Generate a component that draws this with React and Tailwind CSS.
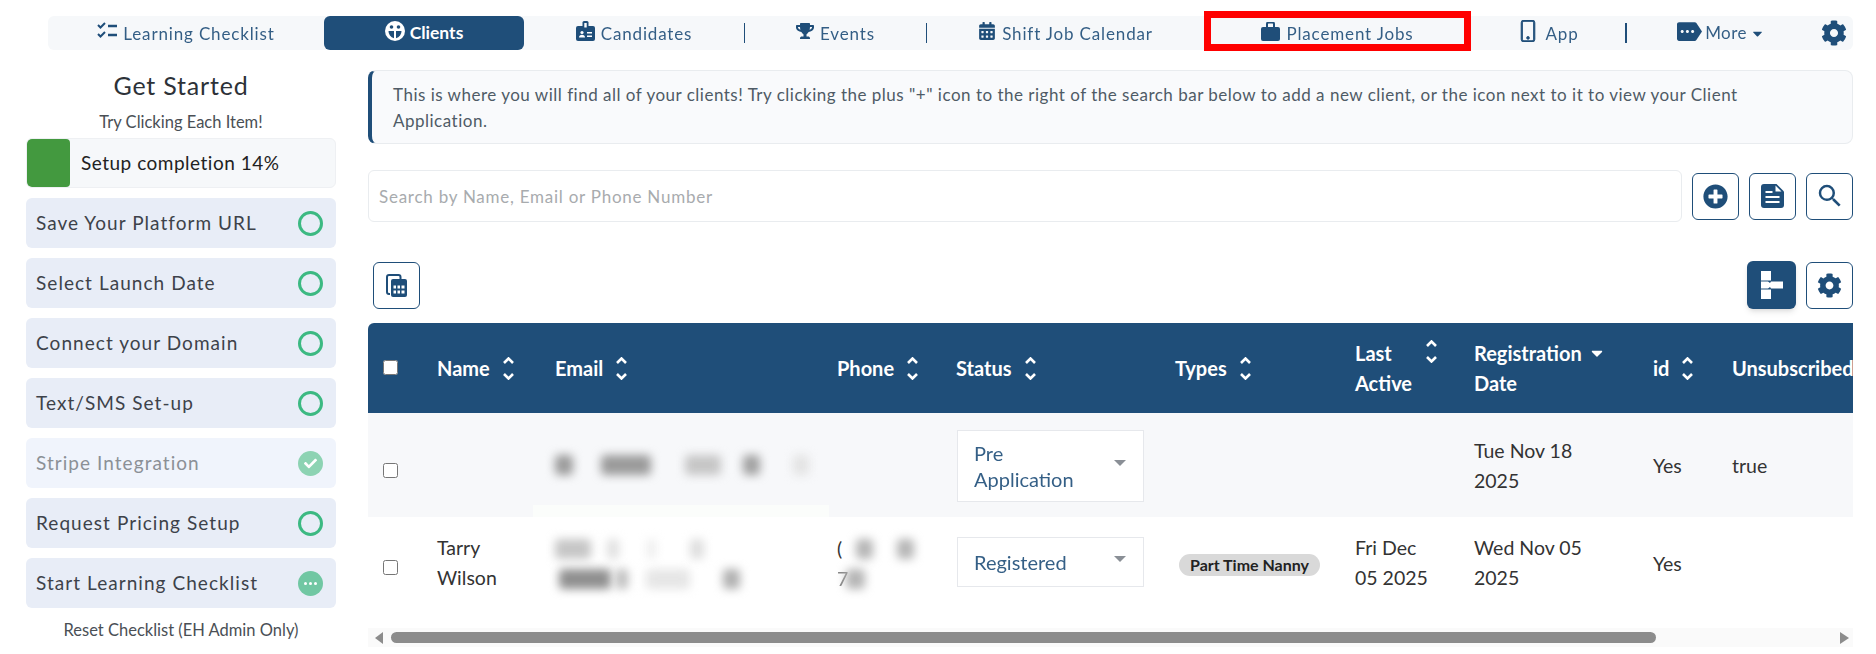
import { FaTrophy, FaCalendarAlt, FaCog, FaPlusCircle, FaCaretDown, FaCheck } from 'react-icons/fa';
import { MdMore, MdSearch } from 'react-icons/md';
import { BsPhone } from 'react-icons/bs';

const font = { fontFamily: '"Lato", "Noto Sans", sans-serif' };

function TasksIcon() {
  return (
    <svg width="20" height="18" viewBox="0 0 20 18" fill="none" stroke="currentColor">
      <path d="M1 3l2.5 2.5L8 1" strokeWidth="2" />
      <path d="M1 12l2.5 2.5L8 10" strokeWidth="2" />
      <path d="M11 4h9M11 13h9" strokeWidth="2.4" />
    </svg>
  );
}

function FaceIcon() {
  return (
    <svg width="20" height="20" viewBox="0 0 20 20" className="-mt-[4px]">
      <circle cx="10" cy="10" r="10" fill="white" />
      <circle cx="6.500" cy="6" r="1.800" fill="#1f4e79" />
      <circle cx="13.500" cy="6" r="1.800" fill="#1f4e79" />
      <path d="M3.500 10h5.500v7.200A7 7 0 0 1 3.500 10zM11 10h5.500A7 7 0 0 1 11 17.200z" fill="#1f4e79" />
    </svg>
  );
}

function BadgeIcon() {
  return (
    <svg width="19" height="20" viewBox="0 0 19 20">
      <rect x="0" y="5" width="19" height="15" rx="2" fill="currentColor" />
      <rect x="6.500" y="0" width="6" height="9" rx="1.500" fill="currentColor" />
      <rect x="8.300" y="2" width="2.400" height="4.500" fill="white" />
      <circle cx="6" cy="11.500" r="1.600" fill="white" />
      <path d="M3 16.500c0-2 1.300-2.800 3-2.800s3 .8 3 2.800z" fill="white" />
      <path d="M11 11h5v1.500h-5zM11 14.500h5V16h-5z" fill="white" />
    </svg>
  );
}

function CaseIcon() {
  return (
    <svg width="19" height="19" viewBox="0 0 19 19">
      <rect x="0" y="5" width="19" height="14" rx="2" fill="currentColor" />
      <path d="M6 6V2a1.500 1.500 0 0 1 1.500-1.500h4A1.500 1.500 0 0 1 13 2v4" fill="none" stroke="currentColor" strokeWidth="2" />
    </svg>
  );
}

function DocIcon() {
  return (
    <svg width="23" height="24" viewBox="0 0 23 24">
      <path d="M3 0h12.500L23 7.500V21a3 3 0 0 1-3 3H3a3 3 0 0 1-3-3V3a3 3 0 0 1 3-3z" fill="#1f4e79" />
      <path d="M14.500 1.500v6h6z" fill="white" />
      <path d="M4.500 7h7v2h-7zM4.500 12h14v2h-14zM4.500 17h14v2h-14z" fill="white" />
    </svg>
  );
}

function SortIcon() {
  return (
    <svg width="13" height="23" viewBox="0 0 13 23" fill="none" stroke="currentColor" strokeWidth="2.6" className="shrink-0">
      <path d="M2 6l4.500-4.500L11 6" />
      <path d="M2 17l4.500 4.500L11 17" />
    </svg>
  );
}

function NavItem({ icon, label, className }) {
  return (
    <div className={`flex items-center justify-center gap-[6px] h-full text-[#1f4e79] ${className}`}>
      <span className="flex items-center -mt-[4px]">{icon}</span>
      <span className="text-[17px] tracking-[0.850px] opacity-90 leading-none whitespace-nowrap">{label}</span>
    </div>
  );
}

function Navbar() {
  return (
    <div className="ml-[48px] w-[1805px] h-[34px] flex items-center bg-[#f6f8fa] rounded-md">
      <NavItem icon={<TasksIcon />} label="Learning Checklist" className="w-[276px]" />
      <div className="w-[200px] h-full bg-[#1f4e79] rounded-md flex items-center justify-center gap-[5px] text-white">
        <FaceIcon />
        <span className="text-[17.500px] font-bold">Clients</span>
      </div>
      <NavItem icon={<BadgeIcon />} label="Candidates" className="w-[221px] border-r border-[#1f4e79] !h-[20px]" />
      <NavItem icon={<FaTrophy size={18} />} label="Events" className="w-[182px] border-r border-[#1f4e79] !h-[20px]" />
      <NavItem icon={<FaCalendarAlt size={18} />} label="Shift Job Calendar" className="w-[277px]" />
      <div className="relative w-[267px] h-full">
        <NavItem icon={<CaseIcon />} label="Placement Jobs" className="w-full" />
        <div className="absolute -top-[5px] -bottom-[1px] left-0 right-0 border-[7px] border-[#ff0000] pointer-events-none" />
      </div>
      <NavItem icon={<BsPhone size={22} strokeWidth={0.6} />} label="App" className="w-[156px] border-r-2 border-[#1f4e79] !h-[20px]" />
      <div className="w-[188px] flex items-center justify-center gap-[3px] text-[#1f4e79]">
        <MdMore size={25} className="-mt-[4px] -scale-x-100" />
        <span className="text-[17px] tracking-[0.4px] opacity-90">More</span>
        <FaCaretDown size={15} />
      </div>
      <FaCog size={26} className="text-[#1f4e79] ml-[6px]" />
    </div>
  );
}

const checklist = [
  { label: 'Save Your Platform URL', state: 'open' },
  { label: 'Select Launch Date', state: 'open' },
  { label: 'Connect your Domain', state: 'open' },
  { label: 'Text/SMS Set-up', state: 'open' },
  { label: 'Stripe Integration', state: 'done' },
  { label: 'Request Pricing Setup', state: 'open' },
  { label: 'Start Learning Checklist', state: 'progress' },
];

function ChecklistItem({ label, state }) {
  return (
    <div className={`h-[50px] rounded-md flex items-center justify-between pl-[10px] pr-[13px] ${state === 'done' ? 'bg-[#f0f4fc] text-[#8b9096]' : 'bg-[#e8edf7] text-[#3d424a]'}`}>
      <span className="text-[19px] tracking-[1.050px]">{label}</span>
      {state === 'open' && <span className="w-[25px] h-[25px] rounded-full border-[3px] border-[#3cb982]" />}
      {state === 'done' && (
        <span className="w-[25px] h-[25px] rounded-full bg-[#8dd3b3] flex items-center justify-center text-white">
          <FaCheck size={13} />
        </span>
      )}
      {state === 'progress' && (
        <span className="w-[25px] h-[25px] rounded-full bg-[#71c7a3] flex items-center justify-center gap-[2px]">
          <i className="w-[3px] h-[3px] rounded-full bg-white" />
          <i className="w-[3px] h-[3px] rounded-full bg-white" />
          <i className="w-[3px] h-[3px] rounded-full bg-white" />
        </span>
      )}
    </div>
  );
}

function Sidebar() {
  return (
    <div className="ml-[26px] w-[310px] shrink-0 pt-[20px]">
      <h2 className="text-[25px] leading-[30px] text-center text-[#2d3238] tracking-[0.800px]">Get Started</h2>
      <p className="mt-[12px] text-[16.500px] leading-[20px] text-center text-[#4a4f55]">Try Clicking Each Item!</p>
      <div className="mt-[6px] h-[50px] rounded-md bg-[#f6f8fa] border border-[#eef0f3] flex items-center overflow-hidden">
        <div className="w-[43px] h-full bg-[#43993f] rounded-sm" />
        <span className="ml-[11px] text-[19px] tracking-[0.500px] text-[#222]">Setup completion 14%</span>
      </div>
      <div className="mt-[10px] flex flex-col gap-[10px]">
        {checklist.map((item) => (
          <ChecklistItem key={item.label} {...item} />
        ))}
      </div>
      <p className="mt-[12px] text-[16.500px] leading-[20px] text-center text-[#4a4f55]">Reset Checklist (EH Admin Only)</p>
    </div>
  );
}

function IconButton({ children, className = '' }) {
  return (
    <button className={`w-[47px] h-[47px] rounded-md border border-[#1f4e79] bg-white text-[#1f4e79] flex items-center justify-center ${className}`}>
      {children}
    </button>
  );
}

function Blob({ w, h = 20, x = 0, dark = '#a9a9a9' }) {
  return (
    <span
      className="inline-block rounded-sm blur-[5px] shrink-0"
      style={{ width: w, height: h, marginLeft: x, backgroundColor: dark }}
    />
  );
}

function Head({ children, sort = true, className = '' }) {
  return (
    <th className={`px-[16px] font-bold text-left text-white text-[20px] leading-[30px] align-middle ${className}`}>
      <div className="flex items-center gap-[12px]">
        <span className="whitespace-nowrap">{children}</span>
        {sort && <SortIcon />}
      </div>
    </th>
  );
}

function StatusSelect({ children, tall }) {
  return (
    <div className={`ml-[1px] w-[187px] border border-[#e6e8ec] bg-white pl-[16px] pr-[17px] flex items-center justify-between text-[#1f4e79] text-[20px] leading-[26px] ${tall ? 'h-[72px] mt-[1px]' : 'h-[50px] -mt-[4px]'}`}>
      <span className="opacity-90">{children}</span>
      <span className="w-0 h-0 border-x-[6px] border-x-transparent border-t-[6px] border-t-[#8a8f96] mb-[6px]" />
    </div>
  );
}

function ClientsTable() {
  return (
    <div className="mt-[14px] w-[1485px] overflow-hidden rounded-tl-md">
      <table className="table-fixed w-[1721px] border-collapse text-[19.500px] text-[#333]">
        <colgroup>
          <col className="w-[53px]" />
          <col className="w-[118px]" />
          <col className="w-[282px]" />
          <col className="w-[119px]" />
          <col className="w-[219px]" />
          <col className="w-[180px]" />
          <col className="w-[119px]" />
          <col className="w-[179px]" />
          <col className="w-[79px]" />
          <col className="w-[373px]" />
        </colgroup>
        <thead>
          <tr className="h-[90px] bg-[#1f4e79]">
            <th className="pl-[15px] align-middle text-left"><input type="checkbox" className="w-[15px] h-[15px] block -mt-[1px]" /></th>
            <Head>Name</Head>
            <Head>Email</Head>
            <Head>Phone</Head>
            <Head>Status</Head>
            <Head>Types</Head>
            <th className="px-[16px] font-bold text-left text-white text-[20px] leading-[30px]">
              <div className="flex justify-between pr-[4px]">
                <span>Last<br />Active</span>
                <span className="pt-[2px]"><SortIcon /></span>
              </div>
            </th>
            <th className="px-[16px] font-bold text-left text-white text-[20px] leading-[30px]">
              <div className="flex items-center gap-[6px] whitespace-nowrap">Registration <FaCaretDown size={18} /></div>
              Date
            </th>
            <Head>id</Head>
            <Head sort={false}>Unsubscribed</Head>
          </tr>
        </thead>
        <tbody>
          <tr className="h-[104px] bg-[#f7f8fa]">
            <td className="pl-[15px]"><input type="checkbox" className="w-[15px] h-[15px] block mt-[10px]" /></td>
            <td />
            <td className="px-[16px]">
              <div className="flex items-center">
                <Blob w={18} dark="#9a9a9a" />
                <Blob w={50} x={28} dark="#9a9a9a" />
                <Blob w={36} x={34} dark="#c6c6c6" />
                <Blob w={17} x={22} dark="#a0a0a0" />
                <Blob w={16} x={33} dark="#e3e3e3" />
              </div>
            </td>
            <td />
            <td className="px-[16px]"><StatusSelect tall>Pre<br />Application</StatusSelect></td>
            <td />
            <td />
            <td className="px-[16px] leading-[30px]"><div className="mt-[1px]">Tue Nov 18<br />2025</div></td>
            <td className="px-[16px]"><div className="mt-[1px]">Yes</div></td>
            <td className="px-[16px]"><div className="mt-[1px]">true</div></td>
          </tr>
          <tr className="h-[94px] bg-white">
            <td className="pl-[15px]"><input type="checkbox" className="w-[15px] h-[15px] block mt-[6px]" /></td>
            <td className="px-[16px] leading-[30px]"><div className="-mt-[3px]">Tarry<br />Wilson</div></td>
            <td className="relative px-[16px]">
              <div className="absolute -top-[12px] left-[-6px] right-[-8px] h-[12px] bg-[#fbfdfb]" />
              <div className="flex items-center h-[30px]">
                <Blob w={36} dark="#c6c6c6" />
                <Blob w={12} x={16} dark="#e0e0e0" />
                <Blob w={9} x={28} dark="#ededed" />
                <Blob w={14} x={34} dark="#dedede" />
              </div>
              <div className="flex items-center h-[30px]">
                <Blob w={52} x={4} dark="#8f8f8f" />
                <Blob w={12} x={5} dark="#bcbcbc" />
                <Blob w={44} x={18} dark="#e6e6e6" />
                <Blob w={17} x={33} dark="#b0b0b0" />
              </div>
            </td>
            <td className="px-[16px] leading-[30px]">
              <div className="flex items-center h-[30px]">(<Blob w={17} x={14} dark="#b5b5b5" /><Blob w={17} x={24} dark="#b5b5b5" /></div>
              <div className="flex items-center h-[30px]"><span className="opacity-60">7</span><Blob w={19} x={-2} dark="#b5b5b5" /></div>
            </td>
            <td className="px-[16px]"><StatusSelect>Registered</StatusSelect></td>
            <td className="px-[20px]">
              <span className="inline-block h-[22px] w-[141px] rounded-full bg-[#d9d9d9] text-[#222] text-[16px] font-bold leading-[22px] text-center whitespace-nowrap">Part Time Nanny</span>
            </td>
            <td className="px-[16px] leading-[30px]"><div className="-mt-[3px]">Fri Dec<br />05 2025</div></td>
            <td className="px-[16px] leading-[30px] whitespace-nowrap"><div className="-mt-[3px]">Wed Nov 05<br />2025</div></td>
            <td className="px-[16px]">Yes</td>
            <td />
          </tr>
        </tbody>
      </table>
      <div className="mt-[17px] h-[19px] bg-[#fafafa] flex items-center pl-[7px] pr-[4px]">
        <span className="w-0 h-0 border-y-[6px] border-y-transparent border-r-[8px] border-r-[#8c8c8c]" />
        <span className="ml-[8px] w-[1265px] h-[11px] rounded-full bg-[#8c8c8c]" />
        <span className="ml-auto w-0 h-0 border-y-[6px] border-y-transparent border-l-[9px] border-l-[#8c8c8c]" />
      </div>
    </div>
  );
}

export default function App() {
  return (
    <div className="w-[1876px] h-[654px] overflow-hidden bg-white pt-[16px]" style={font}>
      <Navbar />
      <div className="flex">
        <Sidebar />
        <div className="ml-[32px] w-[1485px] pt-[20px]">
          <div className="h-[74px] rounded-lg border border-[#e9ecef] border-l-[4px] border-l-[#1f4e79] bg-[#f9fafc] pl-[21px] flex items-center">
            <p className="pt-[1px] text-[17px] leading-[26px] tracking-[0.500px] text-[#4f5b66] whitespace-nowrap">
              This is where you will find all of your clients! Try clicking the plus "+" icon to the right of the search bar below to add a new client, or the icon next to it to view your Client<br />Application.
            </p>
          </div>
          <div className="mt-[26px] flex items-center gap-[10px]">
            <div className="w-[1314px] h-[52px] rounded-md border border-[#e9ecef] pl-[10px] pt-[1px] flex items-center text-[17px] tracking-[0.750px] text-[#a8abae]">
              Search by Name, Email or Phone Number
            </div>
            <IconButton><FaPlusCircle size={25} /></IconButton>
            <IconButton><DocIcon /></IconButton>
            <IconButton><MdSearch size={30} /></IconButton>
          </div>
          <div className="mt-[39px] flex items-center pl-[5px]">
            <IconButton>
              <svg width="21" height="23" viewBox="0 0 21 23" fill="none">
                <path d="M4 20H3a2 2 0 0 1-2-2V3a2 2 0 0 1 2-2h9.500A2 2 0 0 1 14.500 3v2" stroke="currentColor" strokeWidth="2" />
                <rect x="5" y="5" width="16" height="18" rx="2" fill="currentColor" />
                <path d="M7.500 11.500h2.500v3H7.500zM11.500 11.500h2.500v3h-2.500zM15.500 11.500h3v3h-3zM7.500 16.500h2.500v3H7.500zM11.500 16.500h2.500v3h-2.500zM15.500 16.500h3v3h-3z" fill="white" />
              </svg>
            </IconButton>
            <button className="ml-auto w-[49px] h-[48px] rounded-md bg-[#1f4e79] shadow-md flex items-center justify-center">
              <svg width="22" height="28" viewBox="0 0 22 28" fill="white">
                <path d="M0 0h10v9.500H0zM0 10.500h7l2 1.500 1-1.500h12v7H10l-1-1.500L7 17.500H0zM0 18.500h10V28H0z" />
              </svg>
            </button>
            <IconButton className="ml-[10px]"><FaCog size={25} /></IconButton>
          </div>
          <ClientsTable />
        </div>
      </div>
    </div>
  );
}
